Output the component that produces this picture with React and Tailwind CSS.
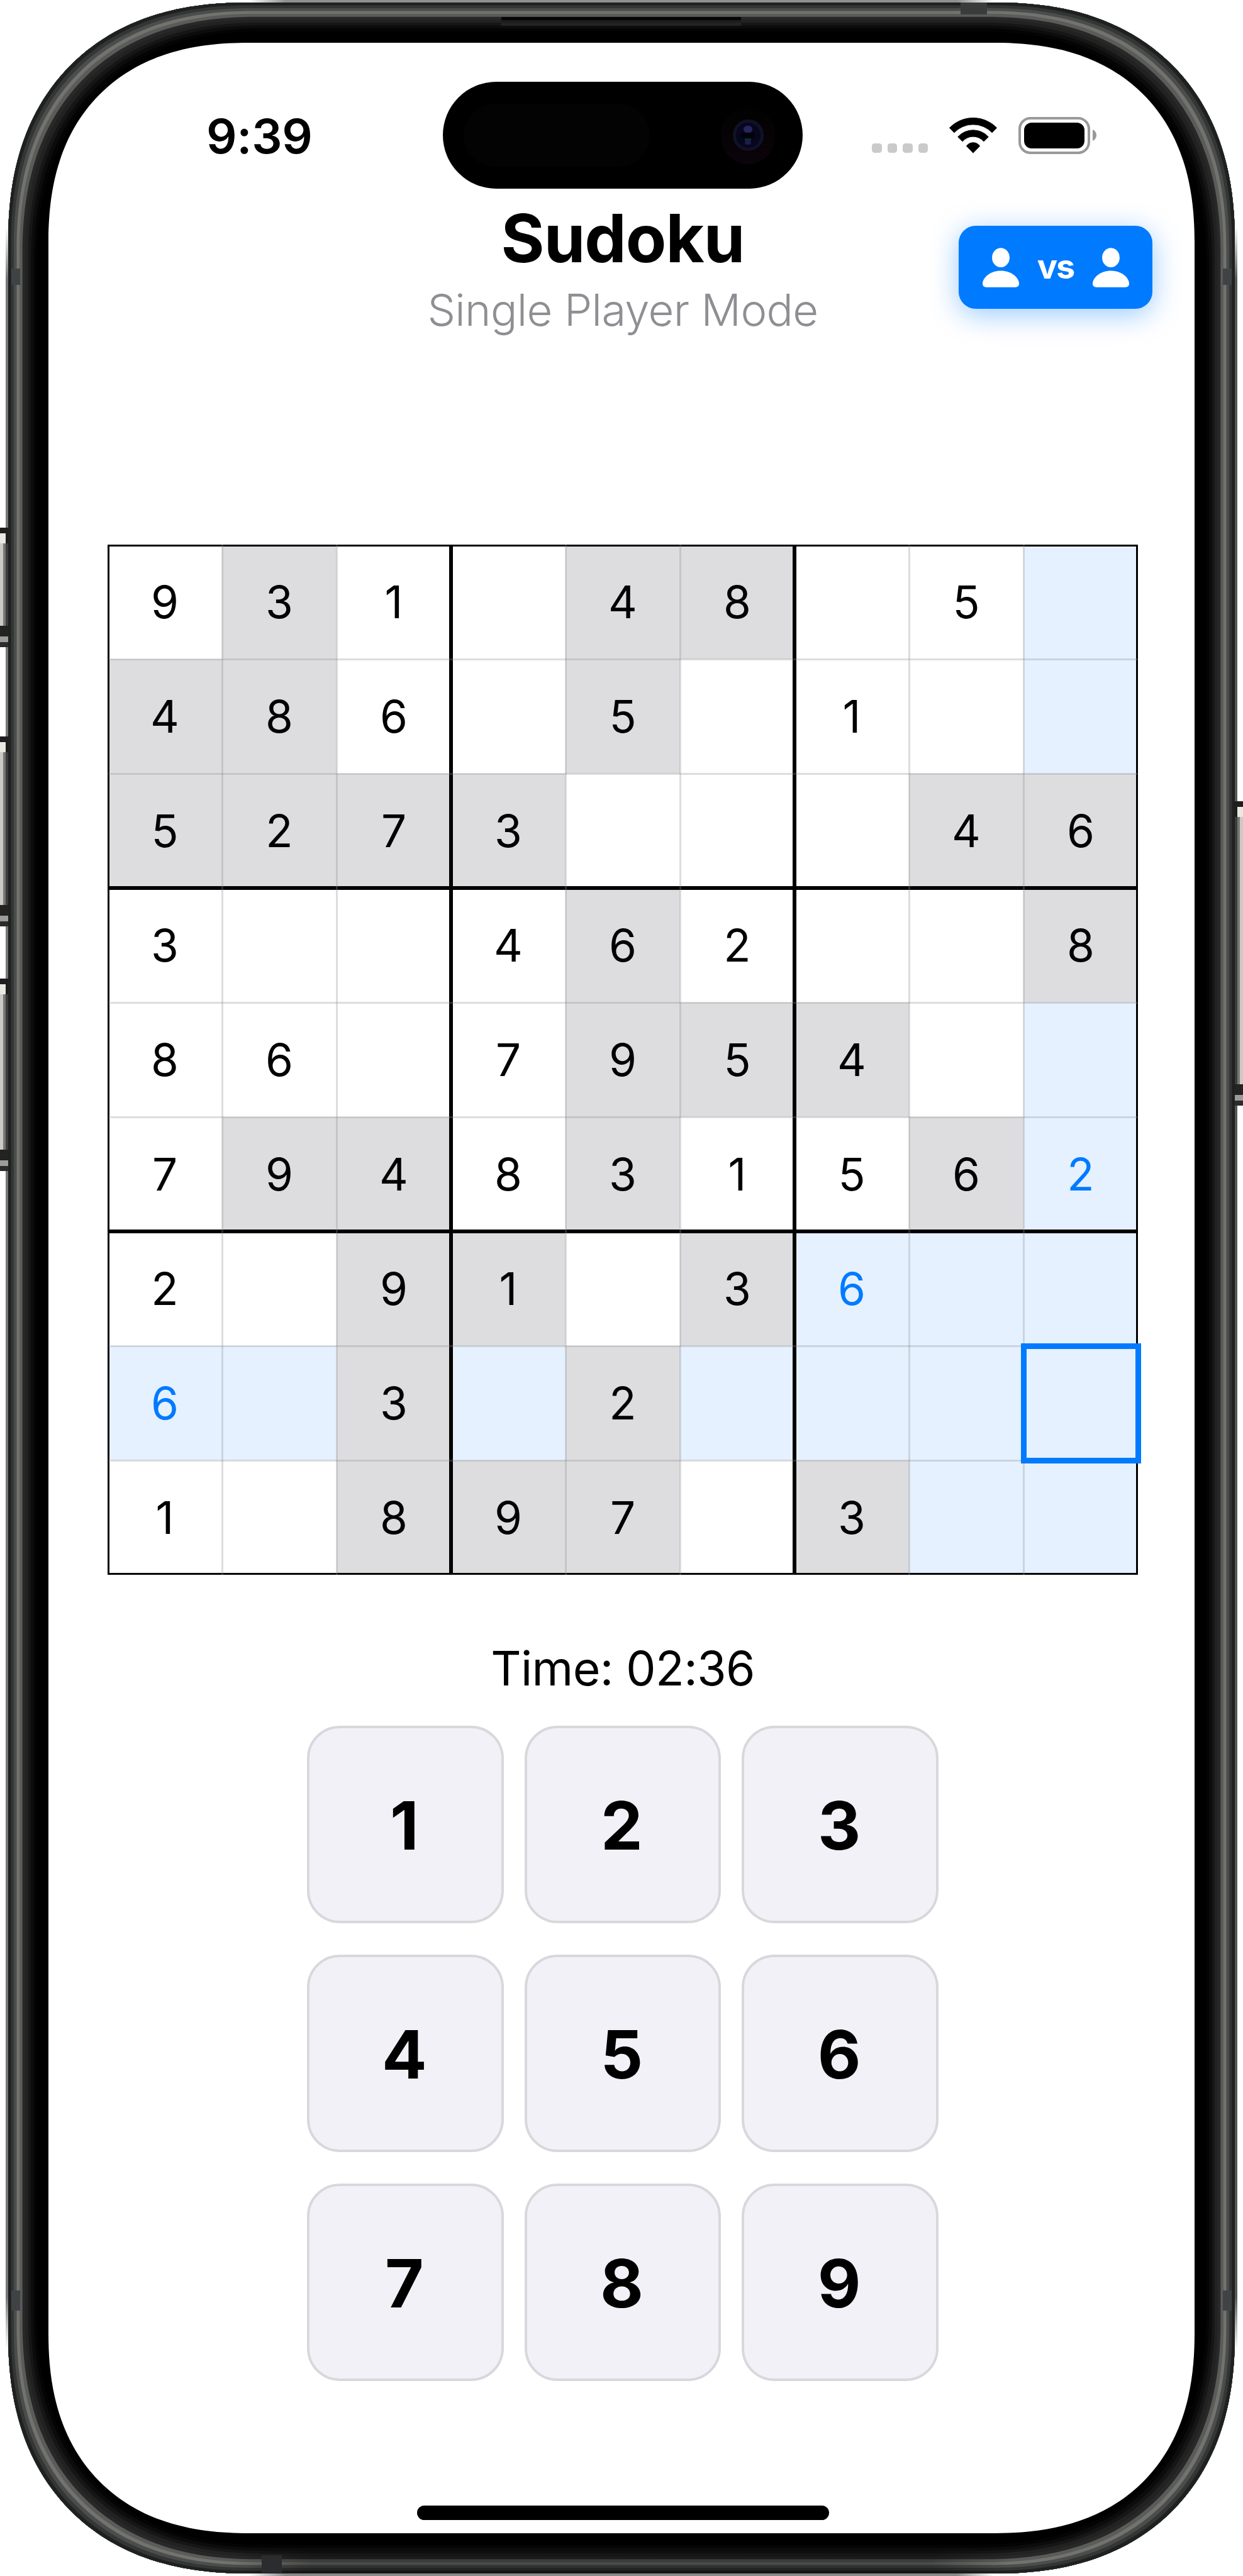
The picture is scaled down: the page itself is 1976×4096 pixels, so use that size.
import React from "react";

// Each cell: value ("_" = empty) followed by its state.
// g = given, w = filled, b = highlighted, s = selected
const BOARD = [
  "9w 3g 1w _w 4g 8g _w 5w _b",
  "4g 8g 6w _w 5g _w 1w _w _b",
  "5g 2g 7g 3g _w _w _w 4g 6g",
  "3w _w _w 4w 6g 2w _w _w 8g",
  "8w 6w _w 7w 9g 5g 4g _w _b",
  "7w 9g 4g 8w 3g 1w 5w 6g 2b",
  "2w _w 9g 1g _w 3g 6b _b _b",
  "6b _b 3g _b 2g _b _b _b _s",
  "1w _w 8g 9g 7g _w 3g _b _b",
].map((row) => row.split(" "));

const CELL_STYLE = {
  g: "bg-[#dddddf] text-black",
  w: "bg-white text-black",
  b: "bg-[#e5f1ff] text-[#007aff]",
  s: "bg-[#e5f1ff] text-[#007aff]",
};

function Cell({ code }) {
  const [value, state] = code;
  return (
    <div className={`relative flex items-center justify-center text-[71px] leading-none ${CELL_STYLE[state]}`}>
      {value !== "_" && <span>{value}</span>}
      {state === "s" && <div className="absolute -inset-[4.5px] z-20 border-[9px] border-[#007aff]" />}
    </div>
  );
}

function GridLines() {
  return (
    <div className="pointer-events-none absolute inset-0 z-10">
      {/* box separators and outer border */}
      <div className="absolute inset-0 grid grid-cols-3">
        <div className="-mr-[3px] border-r-[6px] border-black" />
        <div className="-mr-[3px] ml-[3px] border-r-[6px] border-black" />
      </div>
      <div className="absolute inset-0 grid grid-rows-3">
        <div className="-mb-[3px] border-b-[6px] border-black" />
        <div className="-mb-[3px] mt-[3px] border-b-[6px] border-black" />
      </div>
      <div className="absolute inset-0 border-[3px] border-black" />
      {/* thin cell separators */}
      <div className="absolute inset-0 grid grid-cols-9">
        {[0, 1, 2, 3, 4, 5, 6, 7].map((i) => (
          <div
            key={i}
            className={`-mr-[1.5px] ${i % 3 === 2 ? "" : "border-r-[3px] border-[#8e8e93]/30"}`}
          />
        ))}
      </div>
      <div className="absolute inset-0 grid grid-rows-9">
        {[0, 1, 2, 3, 4, 5, 6, 7].map((i) => (
          <div
            key={i}
            className={`-mb-[1.5px] ml-[1px] mr-[1px] ${i % 3 === 2 ? "" : "border-b-[3px] border-[#8e8e93]/30"}`}
          />
        ))}
      </div>
    </div>
  );
}

function Board() {
  return (
    <div className="relative ml-[94px] mt-[328px] grid h-[1638px] w-[1638px] shrink-0 grid-cols-9 grid-rows-9">
      {BOARD.flatMap((row, r) => row.map((code, c) => <Cell key={`${r}-${c}`} code={code} />))}
      <GridLines />
    </div>
  );
}

function WifiIcon() {
  return (
    <svg className="ml-[34px] h-[57px] w-[76px] overflow-visible" viewBox="0 0 100 75" fill="black" stroke="black" strokeWidth="1" strokeLinejoin="round">
      <path d="M.5 21.4A69 69 0 0 1 99.500 21.400L89.600 31.500A54.600 54.600 0 0 0 10.400 31.500Z" />
      <path d="M18 40.300A43 43 0 0 1 82 40.300L72.200 50A29 29 0 0 0 27.800 50Z" />
      <path d="M36 59.500A17 17 0 0 1 64 59.500L50 74Z" />
    </svg>
  );
}

function Battery() {
  return (
    <div className="ml-[34px] flex items-center">
      <div className="h-[59px] w-[114px] rounded-[19px] border-[4.500px] border-[#999999] p-[5px]">
        <div className="h-full w-full rounded-[12px] bg-black" />
      </div>
      <svg className="ml-[4px] h-[18px] w-[6px]" viewBox="0 0 8 24" fill="#999999">
        <path d="M0 0C5 2 8 7 8 12S5 22 0 24Z" />
      </svg>
    </div>
  );
}

function StatusBar() {
  return (
    <div className="flex h-[170px] shrink-0 items-center">
      <div className="w-[627px] pl-[251px] pt-[2px] text-[76px] font-semibold leading-none tracking-[-0.3px]">9:39</div>
      <div className="flex h-[170px] w-[572px] items-center rounded-full bg-black pl-[33px]">
        <div className="h-[100px] w-[296px] rounded-full bg-[#030303]" />
        <div className="ml-[113px] flex h-[91px] w-[86px] items-center justify-center rounded-full bg-linear-to-b from-[#020202] to-[#0c030b]">
          <div className="flex h-[50px] w-[49px] flex-col items-center justify-center rounded-full border-[5px] border-[#111126] bg-[#06061f]">
            <div className="h-[11px] w-[14px] rounded-full bg-[#26265c]" />
            <div className="h-[9px] w-[22px] bg-[#02020c]" />
            <div className="h-[5px] w-[10px] bg-[#0c2a34]" />
            <div className="h-[5px] w-[10px] rounded-full bg-[#24184e]" />
          </div>
        </div>
      </div>
      <div className="flex items-center pl-[110px]">
        <div className="flex gap-[9px] pt-[41px]">
          {[0, 1, 2, 3].map((i) => (
            <div key={i} className="h-[15px] w-[15.500px] rounded-[4.500px] bg-[#cacaca]" />
          ))}
        </div>
        <WifiIcon />
        <Battery />
      </div>
    </div>
  );
}

function Person() {
  return (
    <svg className="h-[63px] w-[58px] shrink-0" viewBox="0 0 77 83" fill="white">
      <ellipse cx="38.500" cy="20.500" rx="18.500" ry="20.500" />
      <path d="M38.500 48C60 48 77 62 77 75.500C77 80.500 74 83 69 83H8C3 83 0 80.500 0 75.500C0 62 17 48 38.500 48Z" />
    </svg>
  );
}

function Header() {
  return (
    <div className="flex h-[238px] shrink-0">
      <div className="w-[500px]" />
      <div className="flex flex-1 flex-col items-center pl-[4px] pt-[19px]">
        <h1 className="text-[105.500px] font-bold leading-[120px] tracking-[-1px]">Sudoku</h1>
        <p className="mt-[9px] whitespace-nowrap text-[70.500px] font-light leading-[90px] tracking-[-0.65px] text-[#8e8e93]">
          Single Player Mode
        </p>
      </div>
      <div className="flex w-[500px] justify-end pr-[67px] pt-[59px]">
        <button className="flex h-[132px] w-[308px] items-center justify-center gap-[30px] rounded-[27px] bg-[#007aff] shadow-[0_9px_45px_rgba(0,122,255,0.4)]">
          <Person />
          <span className="flex w-[57px] justify-center pb-[2px] text-[54px] font-bold leading-none tracking-[-2px] text-white">vs</span>
          <Person />
        </button>
      </div>
    </div>
  );
}

function Keypad() {
  return (
    <div className="ml-[411px] mt-[46px] grid w-[1004px] shrink-0 grid-cols-3 gap-x-[33px] gap-y-[50px]">
      {[1, 2, 3, 4, 5, 6, 7, 8, 9].map((n) => (
        <button
          key={n}
          className="flex h-[314px] items-center justify-center rounded-[52px] border-[4px] border-[#d8d8dc] bg-[#f2f1f7] pr-[3px] pt-[4px] text-[106px] font-bold leading-none"
        >
          {n}
        </button>
      ))}
    </div>
  );
}

function SideKey({ className }) {
  return (
    <div className={`absolute flex w-[14px] flex-col bg-[#1e1e1e] pt-[9px] ${className}`}>
      <div className="h-[16px] w-[9px] bg-[#e9e8e3]" />
      <div className="flex flex-1">
        <div className="w-[5px] bg-[#cbcac5]" />
        <div className="w-[4px] bg-[#777775]" />
        <div className="w-[5px] bg-[#3c3c3c]" />
      </div>
      <div className="h-[17px] bg-[#232323]" />
      <div className="h-[9px] bg-[#9c9c98]" />
      <div className="h-[8px] bg-[#2c2c2c]" />
    </div>
  );
}

// Metal band, highlights and hardware keys around the display.
function Bezel() {
  return (
    <>
      <div className="absolute left-[9px] top-[360px] h-[3376px] w-[8px] bg-linear-to-b from-transparent via-[#777777] via-50% to-transparent [background-image:linear-gradient(to_bottom,transparent,#777777_2.5%,#777777_97.5%,transparent)]" />
      <div className="absolute right-[9px] top-[360px] h-[3376px] w-[8px] [background-image:linear-gradient(to_bottom,transparent,#585857_2.5%,#585857_97.5%,transparent)]" />
      <div className="absolute left-[395px] top-0 h-[6px] w-[1186px] [background-image:linear-gradient(to_right,transparent,#8f8f8f_5%,#8f8f8f_95%,transparent)]" />
      <div className="absolute bottom-0 left-[395px] h-[6px] w-[1186px] [background-image:linear-gradient(to_right,transparent,#8a8a8a_5%,#8a8a8a_95%,transparent)]" />
      <SideKey className="left-0 top-[839px] h-[190px]" />
      <SideKey className="left-0 top-[1171px] h-[302px]" />
      <SideKey className="left-0 top-[1556px] h-[306px]" />
      <SideKey className="-scale-x-100 right-0 top-[1274px] h-[484px]" />
    </>
  );
}

function BezelDetails() {
  return (
    <>
      <div className="absolute left-[797px] top-[27px] h-[14px] w-[381px] border-b-[5px] border-t-[5px] border-b-[#242424] border-t-[#060606] bg-[#1c1c1c]" />
      <div className="absolute left-[1527px] top-[4px] h-[19px] w-[42px] bg-[#3a3c3c]" />
      <div className="absolute left-[18px] top-[427px] h-[26px] w-[14px] bg-[#3f4346]" />
      <div className="absolute right-[18px] top-[427px] h-[26px] w-[14px] bg-[#3f4346]" />
      <div className="absolute left-[18px] top-[3642px] h-[32px] w-[14px] bg-[#3f4346]" />
      <div className="absolute right-[18px] top-[3642px] h-[32px] w-[14px] bg-[#3f4346]" />
      <div className="absolute bottom-[5px] left-[370px] h-[36px] w-[1236px] [background-image:linear-gradient(to_right,transparent,rgba(0,0,0,0.35)_10%,rgba(0,0,0,0.35)_90%,transparent)]" />
      <div className="absolute bottom-[5px] left-[416px] h-[28px] w-[32px] bg-[#2b2c2f]" />
    </>
  );
}

export default function App() {
  return (
    <div className="relative h-[4096px] w-[1976px] overflow-hidden bg-white font-['Inter',sans-serif] text-black">
      <Bezel />
      <div className="relative mx-auto h-[4096px] w-[1950px] pb-[4px] pt-[4px]">
        <div className="h-full w-full rounded-[340px] bg-black pl-[64px] pt-[64px] shadow-[inset_0_0_0_4.5px_#1f2020,inset_0_0_0_9px_#343635,inset_0_0_0_13.5px_#4b4d4c,inset_0_0_0_18px_#72726f,inset_0_0_0_22.7px_#5b5b59,inset_0_0_0_27.3px_#282828,inset_0_0_0_32px_#222222,inset_0_0_0_36.4px_#161616,inset_0_0_0_41px_#0c0c0c,inset_0_0_0_45.5px_#040404] supports-[corner-shape:squircle]:rounded-[380px] supports-[corner-shape:squircle]:[corner-shape:superellipse(1.19)]">
          <div className="flex h-[3960px] w-[1822px] flex-col rounded-[280px] bg-white pt-[62px] supports-[corner-shape:squircle]:rounded-[318px] supports-[corner-shape:squircle]:[corner-shape:superellipse(1.22)]">
            <StatusBar />
            <Header />
            <Board />
            <div className="mt-[104px] pl-[4px] text-center text-[75px] leading-[90px] tracking-[-0.6px]">Time: 02:36</div>
            <Keypad />
            <div className="ml-[586px] mt-[198px] h-[23px] w-[655px] shrink-0 rounded-full bg-black" />
          </div>
        </div>
      </div>
      <BezelDetails />
    </div>
  );
}
